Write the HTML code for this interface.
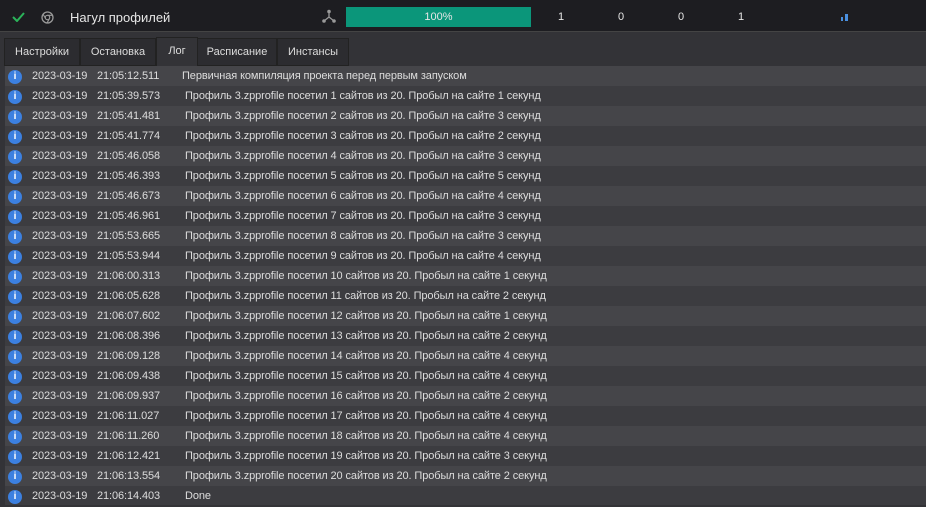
<!DOCTYPE html><html><head><meta charset="utf-8"><style>
body{margin:0;width:926px;height:505px;background:#333337;font-family:"Liberation Sans",sans-serif;overflow:hidden;position:relative;color:#ddd}
.top{position:absolute;left:0;top:0;width:926px;height:31px;background:#1d1d21;border-bottom:1px solid #444}
.t{position:absolute;font-size:13px;color:#e6e6e6}
.tabs{position:absolute;top:38px;left:4px;height:27px}
.tab{position:absolute;top:0;height:26px;background:#2c2c30;border:1px solid #222;font-size:11px;color:#ddd;line-height:26px;text-align:center}
.tab.a{background:#333337;border-bottom:none;top:-1px;height:28px}
.log{position:absolute;left:5px;top:66px;width:921px;height:439px;background:#3c3c40}
.r{height:20px;position:relative;font-size:11px;color:#ddd;line-height:21px;letter-spacing:-0.1px}
.r:nth-child(odd){background:#454549}
.ic{position:absolute;left:3px;top:4px;width:14px;height:14px;border-radius:50%;background:#3c80e0;color:#fff;font-weight:bold;font-size:10px;line-height:14px;text-align:center}
.d{position:absolute;left:27px}.h{position:absolute;left:92px}.m{position:absolute;left:180px}
</style></head><body>
<div class="top">
<svg style="position:absolute;left:12px;top:11px" width="13" height="11"><path d="M1 6l4 4 7-8" stroke="#2bb35a" stroke-width="2" fill="none"/></svg>
<svg style="position:absolute;left:41px;top:11px" width="13" height="13"><circle cx="6.5" cy="6.5" r="5.5" stroke="#999" stroke-width="1.3" fill="none"/><circle cx="6.5" cy="6.5" r="2.2" stroke="#999" stroke-width="1.2" fill="none"/><path d="M6.5 4.3h5M4.6 7.6L2 3M8.4 7.6L6 12" stroke="#999" stroke-width="1.1"/></svg>
<div class="t" style="left:70px;top:10px">Нагул профилей</div>
<svg style="position:absolute;left:322px;top:9px" width="14" height="15"><circle cx="7" cy="2.5" r="1.8" fill="#999"/><circle cx="2" cy="12" r="1.8" fill="#999"/><circle cx="12" cy="12" r="1.8" fill="#999"/><path d="M7 3v5M7 8L2 12M7 8l5 4" stroke="#999" stroke-width="1.3" fill="none"/></svg>
<div style="position:absolute;left:346px;top:7px;width:185px;height:20px;background:#0b967a;color:#e6e6e6;font-size:11px;text-align:center;line-height:21px">100%</div>
<div class="t" style="left:558px;top:11px;font-size:11px">1</div>
<div class="t" style="left:618px;top:11px;font-size:11px">0</div>
<div class="t" style="left:678px;top:11px;font-size:11px">0</div>
<div class="t" style="left:738px;top:11px;font-size:11px">1</div>
<div style="position:absolute;left:841px;top:17px;width:2px;height:4px;background:#4a90e0"></div>
<div style="position:absolute;left:845px;top:14px;width:3px;height:7px;background:#4a90e0"></div>
</div>
<div class="tabs">
<div class="tab" style="left:0;width:74px">Настройки</div>
<div class="tab" style="left:76px;width:74px">Остановка</div>
<div class="tab a" style="left:152px;width:40px">Лог</div>
<div class="tab" style="left:193px;width:78px">Расписание</div>
<div class="tab" style="left:273px;width:70px">Инстансы</div>
</div>
<div class="log">
<div class="r"><span class="ic">i</span><span class="d">2023-03-19</span><span class="h">21:05:12.511</span><span class="m" style="left:177px">Первичная компиляция проекта перед первым запуском</span></div>
<div class="r"><span class="ic">i</span><span class="d">2023-03-19</span><span class="h">21:05:39.573</span><span class="m">Профиль 3.zpprofile посетил 1 сайтов из 20. Пробыл на сайте 1 секунд</span></div>
<div class="r"><span class="ic">i</span><span class="d">2023-03-19</span><span class="h">21:05:41.481</span><span class="m">Профиль 3.zpprofile посетил 2 сайтов из 20. Пробыл на сайте 3 секунд</span></div>
<div class="r"><span class="ic">i</span><span class="d">2023-03-19</span><span class="h">21:05:41.774</span><span class="m">Профиль 3.zpprofile посетил 3 сайтов из 20. Пробыл на сайте 2 секунд</span></div>
<div class="r"><span class="ic">i</span><span class="d">2023-03-19</span><span class="h">21:05:46.058</span><span class="m">Профиль 3.zpprofile посетил 4 сайтов из 20. Пробыл на сайте 3 секунд</span></div>
<div class="r"><span class="ic">i</span><span class="d">2023-03-19</span><span class="h">21:05:46.393</span><span class="m">Профиль 3.zpprofile посетил 5 сайтов из 20. Пробыл на сайте 5 секунд</span></div>
<div class="r"><span class="ic">i</span><span class="d">2023-03-19</span><span class="h">21:05:46.673</span><span class="m">Профиль 3.zpprofile посетил 6 сайтов из 20. Пробыл на сайте 4 секунд</span></div>
<div class="r"><span class="ic">i</span><span class="d">2023-03-19</span><span class="h">21:05:46.961</span><span class="m">Профиль 3.zpprofile посетил 7 сайтов из 20. Пробыл на сайте 3 секунд</span></div>
<div class="r"><span class="ic">i</span><span class="d">2023-03-19</span><span class="h">21:05:53.665</span><span class="m">Профиль 3.zpprofile посетил 8 сайтов из 20. Пробыл на сайте 3 секунд</span></div>
<div class="r"><span class="ic">i</span><span class="d">2023-03-19</span><span class="h">21:05:53.944</span><span class="m">Профиль 3.zpprofile посетил 9 сайтов из 20. Пробыл на сайте 4 секунд</span></div>
<div class="r"><span class="ic">i</span><span class="d">2023-03-19</span><span class="h">21:06:00.313</span><span class="m">Профиль 3.zpprofile посетил 10 сайтов из 20. Пробыл на сайте 1 секунд</span></div>
<div class="r"><span class="ic">i</span><span class="d">2023-03-19</span><span class="h">21:06:05.628</span><span class="m">Профиль 3.zpprofile посетил 11 сайтов из 20. Пробыл на сайте 2 секунд</span></div>
<div class="r"><span class="ic">i</span><span class="d">2023-03-19</span><span class="h">21:06:07.602</span><span class="m">Профиль 3.zpprofile посетил 12 сайтов из 20. Пробыл на сайте 1 секунд</span></div>
<div class="r"><span class="ic">i</span><span class="d">2023-03-19</span><span class="h">21:06:08.396</span><span class="m">Профиль 3.zpprofile посетил 13 сайтов из 20. Пробыл на сайте 2 секунд</span></div>
<div class="r"><span class="ic">i</span><span class="d">2023-03-19</span><span class="h">21:06:09.128</span><span class="m">Профиль 3.zpprofile посетил 14 сайтов из 20. Пробыл на сайте 4 секунд</span></div>
<div class="r"><span class="ic">i</span><span class="d">2023-03-19</span><span class="h">21:06:09.438</span><span class="m">Профиль 3.zpprofile посетил 15 сайтов из 20. Пробыл на сайте 4 секунд</span></div>
<div class="r"><span class="ic">i</span><span class="d">2023-03-19</span><span class="h">21:06:09.937</span><span class="m">Профиль 3.zpprofile посетил 16 сайтов из 20. Пробыл на сайте 2 секунд</span></div>
<div class="r"><span class="ic">i</span><span class="d">2023-03-19</span><span class="h">21:06:11.027</span><span class="m">Профиль 3.zpprofile посетил 17 сайтов из 20. Пробыл на сайте 4 секунд</span></div>
<div class="r"><span class="ic">i</span><span class="d">2023-03-19</span><span class="h">21:06:11.260</span><span class="m">Профиль 3.zpprofile посетил 18 сайтов из 20. Пробыл на сайте 4 секунд</span></div>
<div class="r"><span class="ic">i</span><span class="d">2023-03-19</span><span class="h">21:06:12.421</span><span class="m">Профиль 3.zpprofile посетил 19 сайтов из 20. Пробыл на сайте 3 секунд</span></div>
<div class="r"><span class="ic">i</span><span class="d">2023-03-19</span><span class="h">21:06:13.554</span><span class="m">Профиль 3.zpprofile посетил 20 сайтов из 20. Пробыл на сайте 2 секунд</span></div>
<div class="r"><span class="ic">i</span><span class="d">2023-03-19</span><span class="h">21:06:14.403</span><span class="m">Done</span></div>
</div>
</body></html>
